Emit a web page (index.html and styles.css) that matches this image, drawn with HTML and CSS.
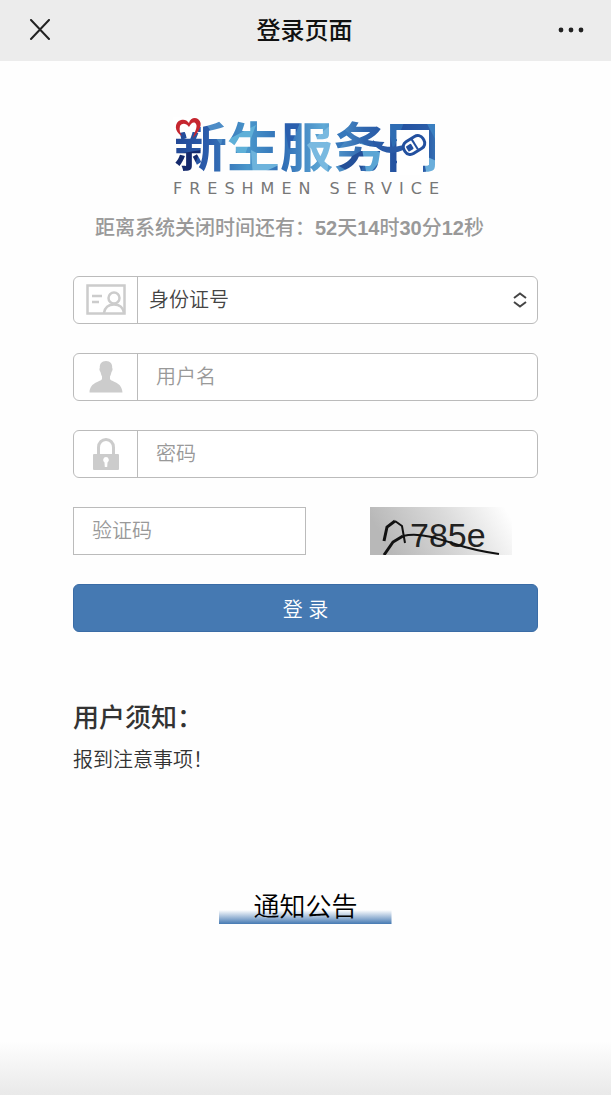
FILE: index.html
```html
<!DOCTYPE html>
<html lang="zh-CN">
<head>
    <meta charset="UTF-8">
    <meta name="viewport" content="width=device-width, initial-scale=1.0">
    <title>登录页面</title>
    <link rel="stylesheet" href="styles.css">
</head>
<body>
    <header class="topbar">
        <button type="button" class="topbar-btn" aria-label="关闭">
            <svg width="24" height="24" viewBox="0 0 24 24" fill="none" stroke="#222" stroke-width="2" stroke-linecap="round">
                <path d="M4 1L22 20M22 1L4 20"/>
            </svg>
        </button>
        <h1 class="topbar-title">登录页面</h1>
        <button type="button" class="topbar-btn" aria-label="更多">
            <svg width="26" height="8" viewBox="0 0 26 8" fill="#222">
                <circle cx="3" cy="3" r="2.4"/>
                <circle cx="13" cy="3" r="2.4"/>
                <circle cx="23" cy="3" r="2.4"/>
            </svg>
        </button>
    </header>

    <main class="page">
        <!-- Site logo -->
        <svg class="logo" width="290" height="100" viewBox="0 0 290 100" role="img" aria-label="新生服务网">
            <defs>
                <linearGradient id="blue" x1="0" y1="0" x2="1" y2="0">
                    <stop offset="0" stop-color="#1f3f8c"/>
                    <stop offset="0.16" stop-color="#2a5cab"/>
                    <stop offset="0.3" stop-color="#4a97cb"/>
                    <stop offset="0.42" stop-color="#2f6db5"/>
                    <stop offset="0.56" stop-color="#5fa9d6"/>
                    <stop offset="0.7" stop-color="#2f66ae"/>
                    <stop offset="0.82" stop-color="#23509f"/>
                    <stop offset="0.92" stop-color="#2b5da8"/>
                    <stop offset="1" stop-color="#4a97cb"/>
                </linearGradient>
                <pattern id="facets" width="290" height="100" patternUnits="userSpaceOnUse">
                    <rect width="290" height="100" fill="url(#blue)"/>
                    <path d="M10 50L40 45L28 72L10 72Z" fill="#14296c"/>
                    <path d="M42 15L66 15L60 40Z" fill="#4d8cc6"/>
                    <path d="M66 35L95 20L82 55Z" fill="#5fb0d8"/>
                    <path d="M90 45L118 60L92 72Z" fill="#6db3dc"/>
                    <path d="M122 15L140 15L128 45Z" fill="#2a5fae"/>
                    <path d="M146 40L172 18L166 70Z" fill="#79b9e0"/>
                    <path d="M172 15L190 30L174 48Z" fill="#3678bb"/>
                    <path d="M176 60L210 40L198 72Z" fill="#245099"/>
                    <path d="M200 38L224 50L206 72Z" fill="#5ba5d4"/>
                    <path d="M226 15L244 15L232 45Z" fill="#2e6cb3"/>
                    <path d="M264 15L280 15L280 45Z" fill="#3a7fc0"/>
                    <path d="M262 50L280 58L266 72Z" fill="#6aaedb"/>
                </pattern>
            </defs>
            <text class="logo-name" x="13" y="62" fill="url(#facets)">新生服务网</text>
            <!-- mouse inside the last character -->
            <path d="M236 25H268V60H262V70H236Z" fill="#fff"/>
            <path d="M212 35C218 41 226 44 243 40L244 44C236 48 224 52 212 39Z" fill="#2a5aa6"/>
            <g transform="rotate(-32 253 40)">
                <rect x="242" y="33" width="22" height="14" rx="6" fill="#fff" stroke="#23509f" stroke-width="3"/>
                <path d="M254 34V46" stroke="#23509f" stroke-width="2"/>
                <rect x="245" y="37" width="6" height="6" rx="1" fill="#23509f"/>
            </g>
            <!-- heart -->
            <path d="M12 12H37V27H12Z" fill="#fff"/>
            <path d="M21 31C13 27 13 17 20 15C23 14 26 15 28 18C29 13 34 12 37 14C43 19 38 26 32 33C33 28 37 22 35 19C33 16 30 18 28 22C25 18 21 18 19 21C18 25 19 28 21 31Z" fill="#c5262f"/>
            <text class="logo-sub" x="12" y="89">FRESHMEN SERVICE</text>
        </svg>

        <p class="countdown">距离系统关闭时间还有：<b>52</b>天<b>14</b>时<b>30</b>分<b>12</b>秒</p>

        <form class="login-form">
            <div class="field">
                <label class="field-icon" for="idType" aria-label="证件类型">
                    <svg width="40" height="32" viewBox="0 0 40 32" fill="none" stroke="#ccc" stroke-width="2.5">
                        <rect x="1.5" y="1.5" width="37" height="28"/>
                        <path d="M6 12H16M6 18H13"/>
                        <circle cx="28" cy="14" r="5.5"/>
                        <path d="M18 29C19 23 23 20.500 28 20.500S37 23 38 29"/>
                    </svg>
                </label>
                <select class="field-input field-select" id="idType">
                    <option>身份证号</option>
                </select>
                <svg class="field-arrows" width="14" height="16" viewBox="0 0 14 16" fill="none" stroke="#444" stroke-width="2">
                    <path d="M1 6L7 1.500L13 6M1 10L7 14.500L13 10"/>
                </svg>
            </div>

            <div class="field">
                <label class="field-icon" for="username" aria-label="用户名">
                    <svg width="34" height="32" viewBox="0 0 34 32" fill="#ccc">
                        <path d="M17 0C12.500 0 10.500 3 10.800 7C10 7.500 10.500 10 11.500 11C12 13 12.500 14.500 13 15.500V18C12 21 1 20.500 0.500 31.500H33.500C33 20.500 22 21 21 18V15.500C21.500 14.500 22 13 22.500 11C23.500 10 24 7.500 23.200 7C23.500 3 21.500 0 17 0Z"/>
                    </svg>
                </label>
                <input class="field-input" type="text" id="username" placeholder="用户名">
            </div>

            <div class="field">
                <label class="field-icon" for="password" aria-label="密码">
                    <svg width="26" height="32" viewBox="0 0 26 32">
                        <path d="M5.500 17V9.500C5.500 4.500 9 1.500 13 1.500S20.500 4.500 20.500 9.500V17" fill="none" stroke="#ccc" stroke-width="3"/>
                        <rect x="0" y="16" width="26" height="16" rx="1" fill="#ccc"/>
                        <path d="M13 19A3 3 0 0 0 11.500 24.500L11.800 29H14.200L14.500 24.500A3 3 0 0 0 13 19Z" fill="#fff"/>
                    </svg>
                </label>
                <input class="field-input" type="password" id="password" placeholder="密码">
            </div>

            <div class="captcha-row">
                <input class="captcha-input" type="text" placeholder="验证码" aria-label="验证码">
                <svg class="captcha" width="142" height="48" viewBox="0 0 142 48" role="img" aria-label="验证码图片">
                    <defs>
                        <linearGradient id="fade" x1="0" y1="0.2" x2="1" y2="0">
                            <stop offset="0" stop-color="#b8b8b8"/>
                            <stop offset="0.5" stop-color="#dadada"/>
                            <stop offset="0.95" stop-color="#fefefe"/>
                        </linearGradient>
                    </defs>
                    <rect width="142" height="48" fill="url(#fade)"/>
                    <text class="captcha-text" x="40" y="40">785e</text>
                    <path d="M14 34L17 20L25 14" fill="none" stroke="#111" stroke-width="3"/>
                    <path d="M25 14L32 19L35 36" fill="none" stroke="#111" stroke-width="2"/>
                    <path d="M14 48L23 35L33 29" fill="none" stroke="#111" stroke-width="3"/>
                    <path d="M33 29C50 25 70 32 85 37S115 45 129 47" fill="none" stroke="#111" stroke-width="2"/>
                </svg>
            </div>

            <button type="submit" class="login-btn">登 录</button>
        </form>

        <section class="tips">
            <h2 class="tips-title">用户须知：</h2>
            <p class="tips-text">报到注意事项！</p>
        </section>

        <h2 class="notice-title">通知公告</h2>
    </main>

    <footer class="bottom-shade"></footer>
</body>
</html>
```
FILE: styles.css
```css
* {
    box-sizing: border-box;
}
body {
    margin: 0;
    min-height: 100vh;
    display: flex;
    flex-direction: column;
    background: #fefefe;
    color: #333;
    font-family: "Liberation Sans", "Noto Sans CJK SC", sans-serif;
    font-size: 20px;
    font-weight: 350;
}
h1, h2, p {
    margin: 0;
}
input, select, button {
    font-family: inherit;
    font-size: 20px;
    font-weight: inherit;
}

/* Top bar */
.topbar {
    display: flex;
    align-items: center;
    justify-content: space-between;
    height: 61px;
    padding: 0 27px;
    background: #ececec;
}
.topbar-btn {
    display: flex;
    padding: 0;
    border: 0;
    background: none;
}
.topbar-title {
    color: #111;
    font-size: 24px;
    font-weight: 500;
    line-height: 60px;
}

.page {
    flex: 1;
    display: flex;
    flex-direction: column;
    padding: 44px 73px 0;
}

/* Logo */
.logo {
    align-self: center;
}
.logo-name {
    font-family: "Noto Sans CJK SC", sans-serif;
    font-size: 53px;
    font-weight: 700;
}
.logo-sub {
    fill: #777;
    font-family: "DejaVu Sans", sans-serif;
    font-size: 16px;
    font-weight: 400;
    letter-spacing: 7px;
}
.countdown {
    padding-left: 22px;
    margin-top: 8px;
    color: #999;
    font-weight: 500;
    line-height: 30px;
}

/* Login form */
.login-form {
    display: flex;
    flex-direction: column;
    gap: 29px;
    margin-top: 33px;
}
.field {
    display: flex;
    align-items: center;
    height: 48px;
    border: 1px solid #bbb;
    border-radius: 6px;
    background: #fff;
}
.field-icon {
    display: flex;
    align-items: center;
    justify-content: center;
    width: 64px;
    height: 100%;
    border-right: 1px solid #bbb;
}
.field-input {
    flex: 1;
    min-width: 0;
    height: 100%;
    padding: 0 18px;
    border: 0;
    background: none;
    color: #444;
    outline: none;
}
.field-select {
    padding: 0 11px;
    appearance: none;
}
.field-arrows {
    margin-right: 10px;
    pointer-events: none;
}
::placeholder {
    color: #999;
}
.captcha-row {
    display: flex;
    justify-content: space-between;
    height: 48px;
    padding-right: 26px;
}
.captcha-input {
    width: 53%;
    padding: 0 18px;
    border: 1px solid #bbb;
    border-radius: 0;
    background: #fff;
}
.captcha-text {
    fill: #222;
    font-family: "Liberation Sans", sans-serif;
    font-size: 34px;
}
.login-btn {
    height: 48px;
    border: 1px solid #3a6ca6;
    border-radius: 6px;
    background: #4579b2;
    color: #fff;
}

/* Notes */
.tips {
    margin-top: 66px;
}
.tips-title {
    font-size: 26px;
    font-weight: 500;
    line-height: 40px;
}
.tips-text {
    margin-top: 7px;
    line-height: 30px;
}
.notice-title {
    align-self: center;
    margin-top: 115px;
    padding: 0 34px;
    background: linear-gradient(#fff, #4579b2) bottom / 100% 14px no-repeat;
    color: #000;
    font-size: 26px;
    font-weight: 350;
    line-height: 34px;
}
.bottom-shade {
    height: 54px;
    background: linear-gradient(#fefefe, #e9e9e9);
}
```
